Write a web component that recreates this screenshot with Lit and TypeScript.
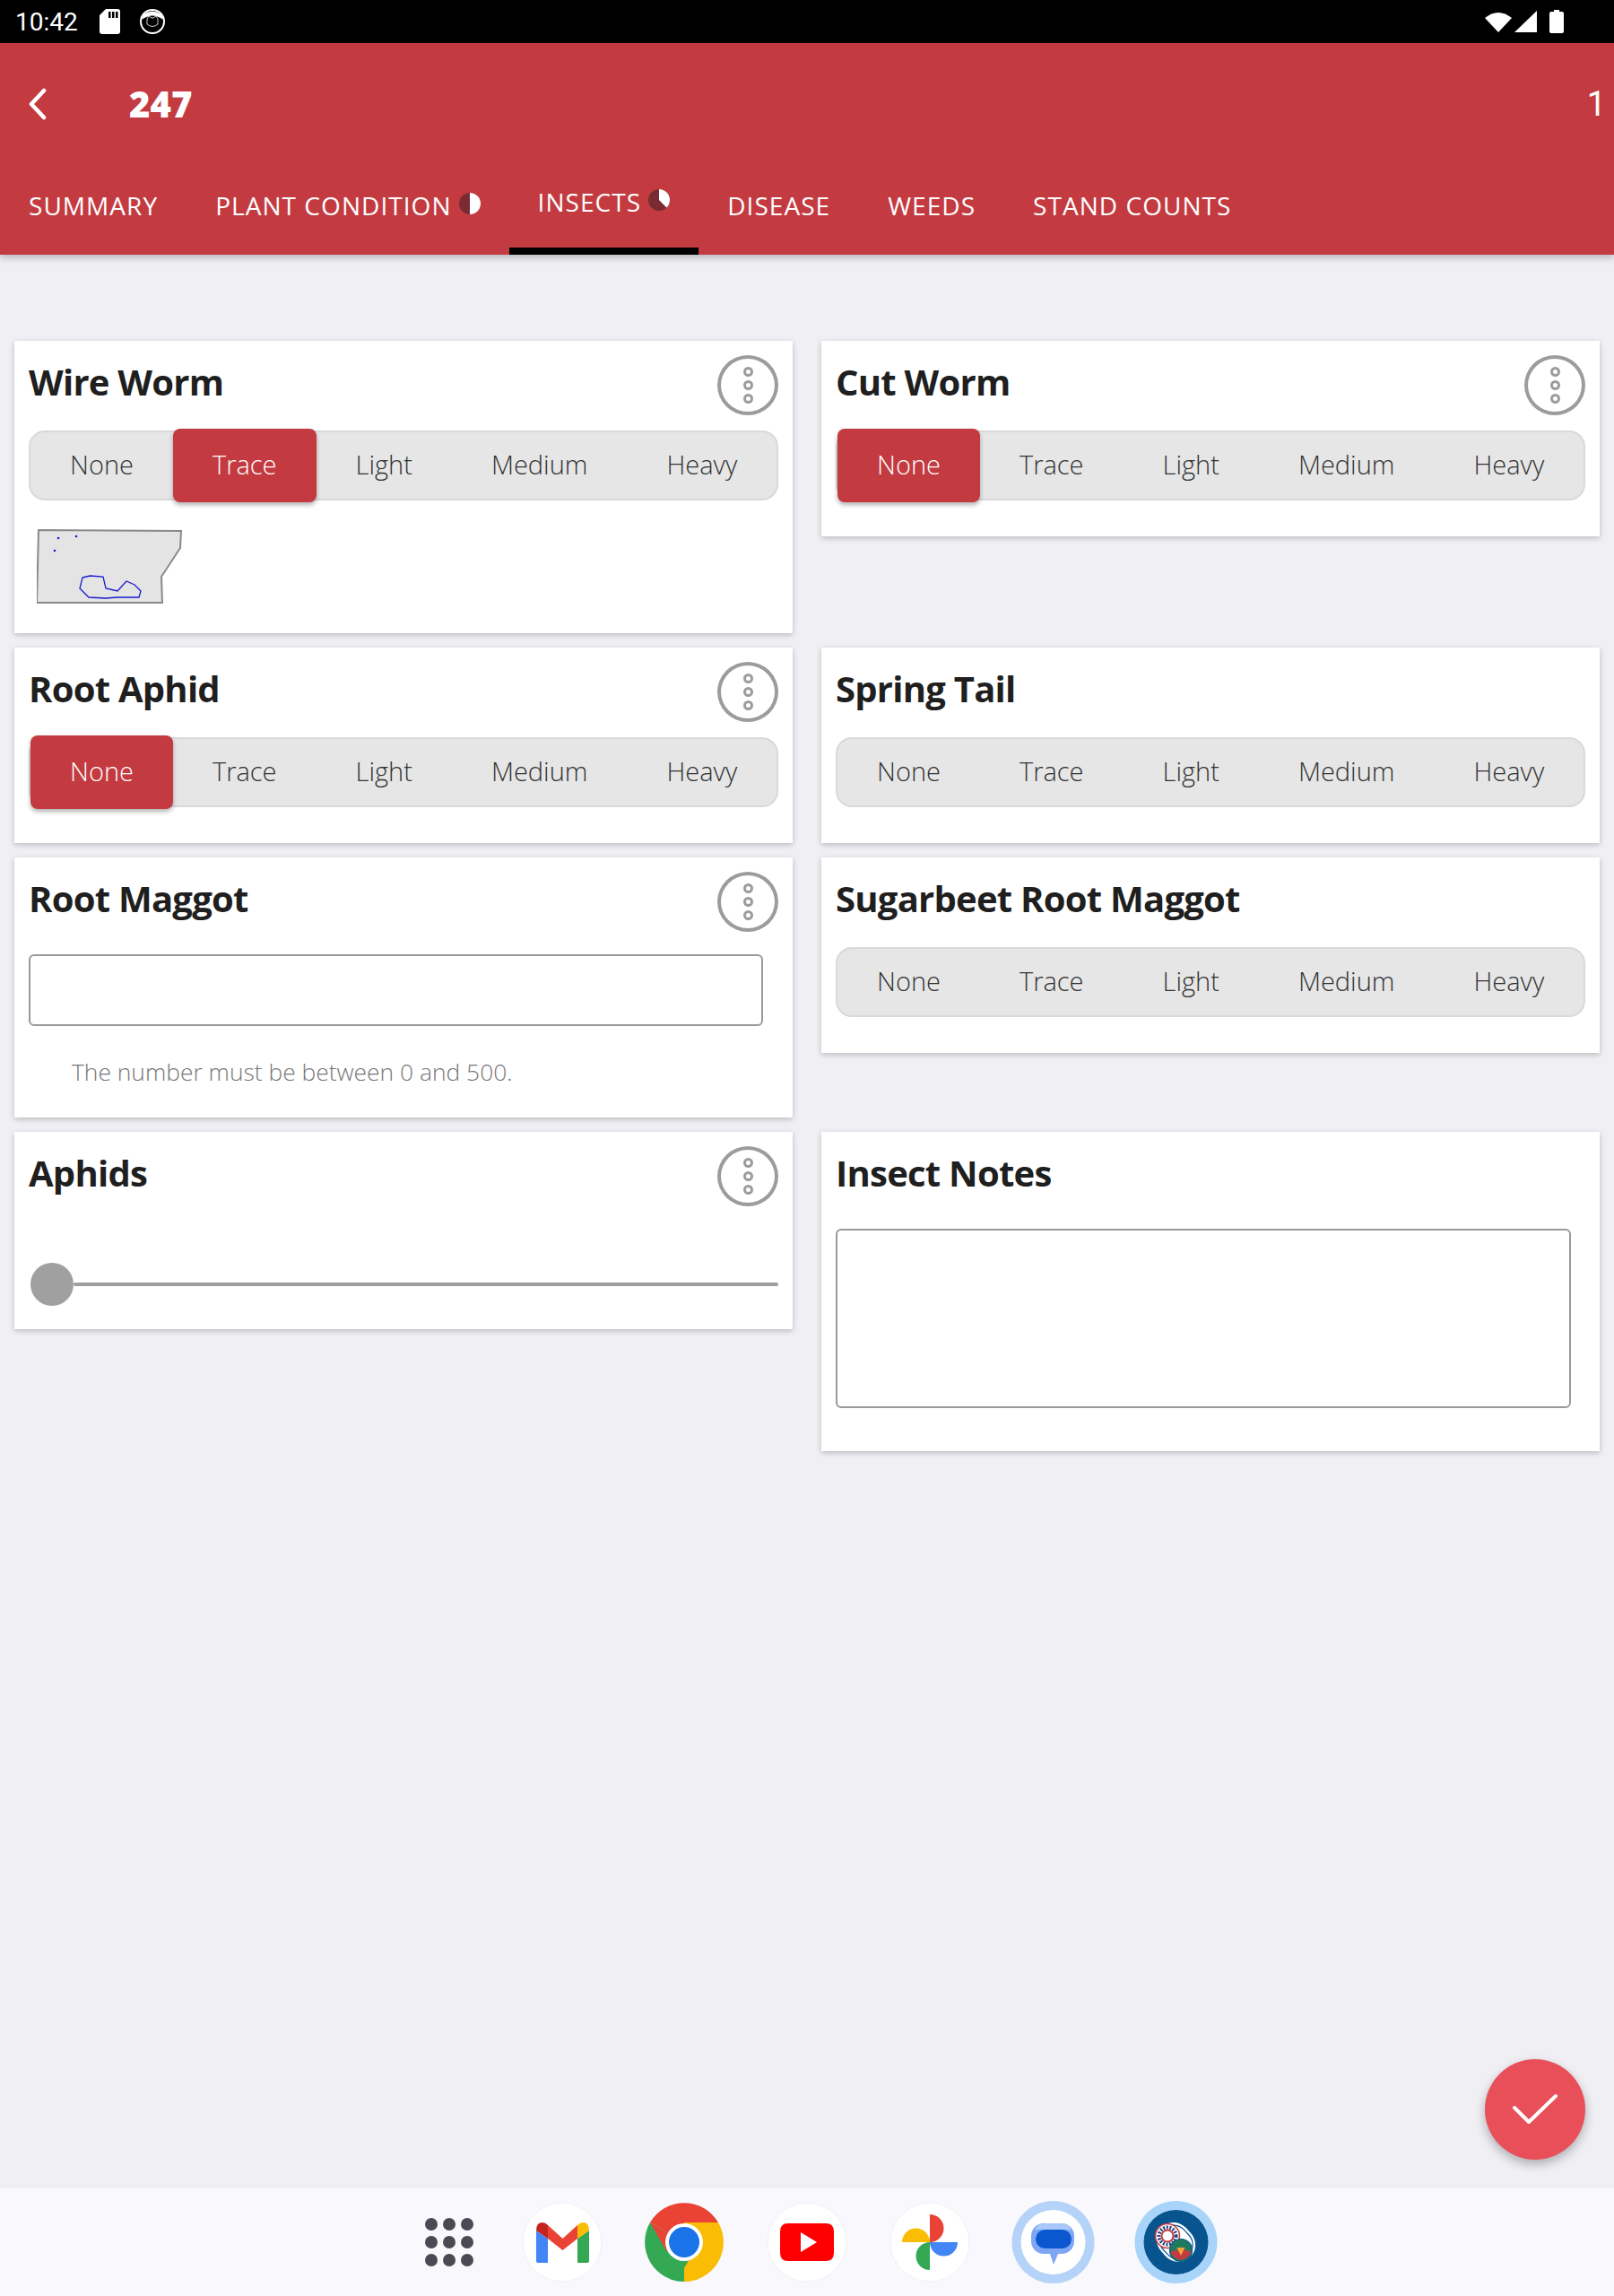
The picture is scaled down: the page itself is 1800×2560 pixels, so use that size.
import { LitElement, html, css, svg } from "lit";
import { customElement } from "lit/decorators.js";

const LEVELS = ["None", "Trace", "Light", "Medium", "Heavy"];

@customElement("app-root")
export class AppRoot extends LitElement {
  static styles = css`
    :host { display: block; width: 1800px; height: 2560px; font-family: "Open Sans", sans-serif; background: #efeff4; position: relative; overflow: hidden; }
    .page { display: flex; flex-direction: column; height: 2560px; }
    .status { height: 48px; background: #000; color: #fff; display: flex; align-items: center; padding: 0 56px 0 17px; font: 400 28px Roboto, sans-serif; flex: none; }
    .status svg { display: block; }
    .status .sd { margin-left: 24px; }
    .status .cat { margin-left: 22px; }
    .status .sp { flex: 1; }
    .status .sig { margin-left: 3px; }
    .status .bat { margin-left: 14px; }
    .header { height: 236px; background: #c33b41; color: #fff; flex: none; display: flex; flex-direction: column; box-shadow: 0 3px 8px rgba(0,0,0,.25); position: relative; z-index: 1; }
    .titlebar { height: 162px; display: flex; align-items: flex-start; padding: 0 9px 0 31px; flex: none; }
    .back { margin-top: 50px; }
    .num { font-size: 40px; font-weight: 800; margin-left: 91px; margin-top: 41px; line-height: 54px; }
    .sp { flex: 1; }
    .page-no { font: 400 38px Roboto, sans-serif; margin-top: 45px; line-height: 46px; }
    .tabs { display: flex; height: 74px; }
    .tab { padding: 0 32px; height: 74px; box-sizing: border-box; display: flex; align-items: flex-start; gap: 8px; font-size: 28px; line-height: 38px; white-space: nowrap; letter-spacing: 1.05px; }
    .tab span { display: block; }
    .tab svg { display: block; margin-top: 5px; }
    .tab.active { border-bottom: 8px solid #000; margin-top: -4px; height: 78px; }
    .main { flex: 1; padding: 96px 16px 0; display: grid; grid-template-columns: 868px 868px; column-gap: 32px; row-gap: 16px; align-content: start; align-items: start; }
    .card { background: #fff; box-shadow: 0 2px 6px rgba(0,0,0,.22); padding: 16px 16px 40px; box-sizing: border-box; }
    .head { display: flex; justify-content: space-between; align-items: flex-start; height: 67px; margin-bottom: 17px; }
    .title { font-size: 40px; font-weight: 700; color: #1f1f1f; line-height: 54px; margin-top: 3px; letter-spacing: -.75px; }
    .more { width: 68px; height: 67px; box-sizing: border-box; border: 4px solid #9c9c9c; border-radius: 50%; display: flex; flex-direction: column; align-items: center; justify-content: center; gap: 4px; }
    .more i { display: block; width: 11px; height: 11px; box-sizing: border-box; border: 3px solid #9c9c9c; border-radius: 50%; }
    .group { height: 78px; box-sizing: border-box; background: #e6e6e6; border: 2px solid #d9d9d9; border-radius: 18px; display: flex; }
    .seg { padding: 0 44px; font-size: 29px; color: #333; line-height: 72px; font-weight: 300; white-space: nowrap; height: 74px; }
    .seg.on { background: #c33b41; color: #fff; margin: -4px 0; height: 82px; line-height: 80px; border-radius: 8px; box-shadow: 0 3px 5px rgba(0,0,0,.3); }
    .card.has-thumb { padding-bottom: 32px; }
    .thumb { display: block; margin: 32px 0 0 9px; }
    .input { width: 819px; height: 80px; box-sizing: border-box; border: 2.5px solid #999; border-radius: 6px; margin: 25px 0 0; }
    .card.num-card { padding-bottom: 33px; }
    .help { font-size: 26.4px; font-weight: 300; color: #777; margin: 33px 0 0 48px; line-height: 36px; }
    .area { width: 820px; height: 200px; box-sizing: border-box; border: 2.5px solid #999; border-radius: 6px; margin: 25px 0 0; }
    .card.notes { padding-bottom: 48px; }
    .slider { height: 50px; margin: 62px 0 0 2px; display: flex; align-items: center; }
    .thumb-dot { width: 48px; height: 48px; border-radius: 50%; background: #a0a0a0; flex: none; }
    .track { flex: 1; height: 4px; background: #9e9e9e; border-radius: 2px; }
    .card.slide { padding-bottom: 25px; }
    .dock { height: 120px; flex: none; background: #f8f8fd; display: flex; align-items: center; padding-left: 470px; }
    .dock svg { display: block; }
    .fab { position: absolute; left: 1656px; top: 2296px; width: 112px; height: 112px; border-radius: 50%; background: #e94f58; box-shadow: 0 5px 12px rgba(0,0,0,.28); display: flex; align-items: center; justify-content: center; }
  `;

  pie(d: string) {
    return html`<svg width="24" height="24" viewBox="0 0 24 24"><circle cx="12" cy="12" r="12" fill="#7a2a33"/><path d="${d}" fill="#fff"/></svg>`;
  }

  toggle(sel: number) {
    return html`<div class="group">${LEVELS.map((l, i) => html`<div class="seg ${i === sel ? "on" : ""}">${l}</div>`)}</div>`;
  }

  head(title: string, more = true) {
    return html`<div class="head"><div class="title">${title}</div>${more ? html`<div class="more"><i></i><i></i><i></i></div>` : ""}</div>`;
  }

  dock() {
    const circle = (x: number, r = 44) => svg`<circle cx="${x}" cy="39" r="${r}" fill="#fff" stroke="#f0f0f6" stroke-width="1"/>`;
    return html`<svg width="900" height="96" viewBox="0 -9 900 96">
      <g fill="#4a4a55">
        ${[19, 39, 59].map((y) => [11, 31, 51].map((x) => svg`<circle cx="${x}" cy="${y}" r="7"/>`))}
      </g>
      ${circle(157)}
      <g transform="translate(128,17)">
        <path d="M0 9 L0 43 Q0 45 3 45 L13 45 L13 18Z" fill="#4285f4"/>
        <path d="M46 18 L46 45 L56 45 Q59 45 59 43 L59 9Z" fill="#34a853"/>
        <path d="M13 18 L29.5 31 L46 18 L46 3 L29.5 18 L13 3Z" fill="#ea4335"/>
        <path d="M0 9 Q0 0 7 0 Q10 0 13 3 L13 18 L0 9Z" fill="#c5221f"/>
        <path d="M46 3 Q49 0 52 0 Q59 0 59 9 L46 18Z" fill="#fbbc04"/>
      </g>
      <g transform="translate(293,39)">
        <path d="M0 0 L-38 -22 A44 44 0 0 1 38 -22Z" fill="#ea4335"/>
        <path d="M0 0 L38 -22 A44 44 0 0 1 0 44Z" fill="#fbbc04"/>
        <path d="M0 0 L0 44 A44 44 0 0 1 -38 -22Z" fill="#34a853"/>
        <path d="M-38 -22 L-19 11 L0 0Z" fill="#ea4335"/>
        <path d="M38 -22 L0 -22 L0 0Z" fill="#fbbc04"/>
        <path d="M-9 44 L11 10 L0 0 L-19 10Z" fill="#34a853"/>
        <circle r="21" fill="#fff"/><circle r="17" fill="#1a73e8"/>
      </g>
      ${circle(430)}
      <path d="M409 18 H451 Q460 18 460 27 V51 Q460 60 451 60 H409 Q400 60 400 51 V27 Q400 18 409 18Z" fill="#f00"/>
      <path d="M423 28 L441 39 L423 50Z" fill="#fff"/>
      ${circle(567)}
      <g transform="translate(567,39)">
        <path d="M0 0 V-31 A15.5 15.5 0 0 1 0 0Z" fill="#ea4335"/>
        <path d="M0 0 H31 A15.5 15.5 0 0 1 0 0Z" fill="#4285f4"/>
        <path d="M0 0 V31 A15.5 15.5 0 0 1 0 0Z" fill="#34a853"/>
        <path d="M0 0 H-31 A15.5 15.5 0 0 1 0 0Z" fill="#fbbc04"/>
      </g>
      <circle cx="704.5" cy="39" r="46" fill="#b5d3f8"/><circle cx="704.5" cy="39" r="36" fill="#fff"/>
      <path d="M696 18 H714 A14 14 0 0 1 728 32 V38 A14 14 0 0 1 714 52 H710 L705 64 L701 52 H694 A14 14 0 0 1 680 38 V32 A14 14 0 0 1 696 18Z" fill="#7fa6f5"/>
      <path d="M696 18 H714 A12 12 0 0 1 725 25 H684 A12 12 0 0 1 696 18Z" fill="#a8c7fa"/>
      <rect x="685" y="25" width="40" height="21" rx="10.5" fill="#0b57d0"/>
      <circle cx="841.5" cy="39" r="46" fill="#a9d4fa"/><circle cx="841.5" cy="39" r="36" fill="#07548f"/>
      <g transform="translate(841.5,39)">
        <rect x="-23" y="-19" width="46" height="38" rx="19" fill="#fff" transform="rotate(48)"/>
        <rect x="-20" y="-16" width="40" height="32" rx="16" fill="#fff" stroke="#07548f" stroke-width="1.2" transform="rotate(48)"/>
        <circle cx="-9.5" cy="-7" r="13.5" fill="#fff" stroke="#c33b41" stroke-width="1.5"/>
        <circle cx="-9.5" cy="-7" r="9.5" fill="none" stroke="#21447a" stroke-width="4" stroke-dasharray="2 1.6"/>
        <circle cx="-9.5" cy="-7" r="6.5" fill="#fff" stroke="#c33b41" stroke-width="2"/>
        <circle cx="5.5" cy="9" r="12.5" fill="#1d7a5a" stroke="#07548f" stroke-width="1.2"/>
        <path d="M-6 11 A12 12 0 0 0 17 11 Q6 5 -6 11Z" fill="#c33b41"/>
        <path d="M1 6 H10 L5.5 15Z" fill="#f2a53a"/>
      </g>
    </svg>`;
  }

  render() {
    return html`
      <div class="page">
        <div class="status">
          <span>10:42</span>
          <svg class="sd" width="23" height="28" viewBox="0 0 23 28"><path d="M7 0 H20 Q23 0 23 3 V25 Q23 28 20 28 H3 Q0 28 0 25 V7Z" fill="#fff"/><path d="M10 3h2.5v7H10zM14 3h2.5v7H14zM18 3h2.5v7H18z" fill="#000"/></svg>
          <svg class="cat" width="28" height="28" viewBox="0 0 28 28"><circle cx="14" cy="14" r="13" fill="#000" stroke="#fff" stroke-width="2"/><path d="M2 12 Q14 3 26 12 L24 6 Q14 -1 4 6Z" fill="#fff"/><path d="M8 11 L10 8 L13 10 H15 L18 8 L20 11 V17 Q14 22 8 17Z" fill="#000" stroke="#fff" stroke-width=".8"/></svg>
          <div class="sp"></div>
          <svg width="30" height="24" viewBox="0 0 30 24"><path d="M15 24 L0 8 Q15 -4 30 8Z" fill="#fff"/></svg>
          <svg class="sig" width="25" height="24" viewBox="0 0 25 24"><path d="M25 0 V24 H0Z" fill="#fff"/></svg>
          <svg class="bat" width="16" height="26" viewBox="0 0 16 26"><path d="M5 0 H11 V2 H14 Q16 2 16 4 V24 Q16 26 14 26 H2 Q0 26 0 24 V4 Q0 2 2 2 H5Z" fill="#fff"/></svg>
        </div>
        <div class="header">
          <div class="titlebar">
            <svg class="back" width="22" height="36" viewBox="0 0 22 36"><path d="M18 3 L4 18 L18 33" fill="none" stroke="#fff" stroke-width="4.5" stroke-linecap="round" stroke-linejoin="round"/></svg>
            <div class="num">247</div>
            <div class="sp"></div>
            <div class="page-no">1</div>
          </div>
          <div class="tabs">
            <div class="tab"><span>SUMMARY</span></div>
            <div class="tab"><span>PLANT CONDITION</span>${this.pie("M12 0 A12 12 0 0 1 12 24Z")}</div>
            <div class="tab active"><span>INSECTS</span>${this.pie("M12 0 A12 12 0 0 1 24 12 A12 12 0 0 1 20.5 20.5 L12 12Z")}</div>
            <div class="tab"><span>DISEASE</span></div>
            <div class="tab"><span>WEEDS</span></div>
            <div class="tab"><span>STAND COUNTS</span></div>
          </div>
        </div>
        <div class="main">
          <div class="card has-thumb">
            ${this.head("Wire Worm")}
            ${this.toggle(1)}
            <svg class="thumb" width="165" height="84" viewBox="0 0 165 84">
              <path d="M2 1 L161 2 L160 21 L139 53 L140 82 L0 82Z" fill="#e4e4e4" stroke="#8a8a8a" stroke-width="2"/>
              <path d="M51 54 L59.5 52 L74 53 L77 66 L90 69 L100 58 L109 62 L116 69 L114 76 L90 76 L77 77 L58 76 L48 66Z" fill="none" stroke="#1a1ad0" stroke-width="1.3"/>
              <circle cx="24" cy="10" r="1.3" fill="#1a1ad0"/><circle cx="44" cy="8" r="1.3" fill="#1a1ad0"/><circle cx="20" cy="24" r="1.3" fill="#1a1ad0"/>
            </svg>
          </div>
          <div class="card">${this.head("Cut Worm")}${this.toggle(0)}</div>
          <div class="card">${this.head("Root Aphid")}${this.toggle(0)}</div>
          <div class="card">${this.head("Spring Tail", false)}${this.toggle(-1)}</div>
          <div class="card num-card">
            ${this.head("Root Maggot")}
            <div class="input"></div>
            <div class="help">The number must be between 0 and 500.</div>
          </div>
          <div class="card">${this.head("Sugarbeet Root Maggot", false)}${this.toggle(-1)}</div>
          <div class="card slide">
            ${this.head("Aphids")}
            <div class="slider"><div class="thumb-dot"></div><div class="track"></div></div>
          </div>
          <div class="card notes">
            ${this.head("Insect Notes", false)}
            <div class="area"></div>
          </div>
        </div>
        <div class="dock">${this.dock()}</div>
      </div>
      <div class="fab"><svg width="50" height="36" viewBox="0 0 50 36"><path d="M2 16 L18 32 L48 3" fill="none" stroke="#fff" stroke-width="4" stroke-linecap="round" stroke-linejoin="round"/></svg></div>
    `;
  }
}
